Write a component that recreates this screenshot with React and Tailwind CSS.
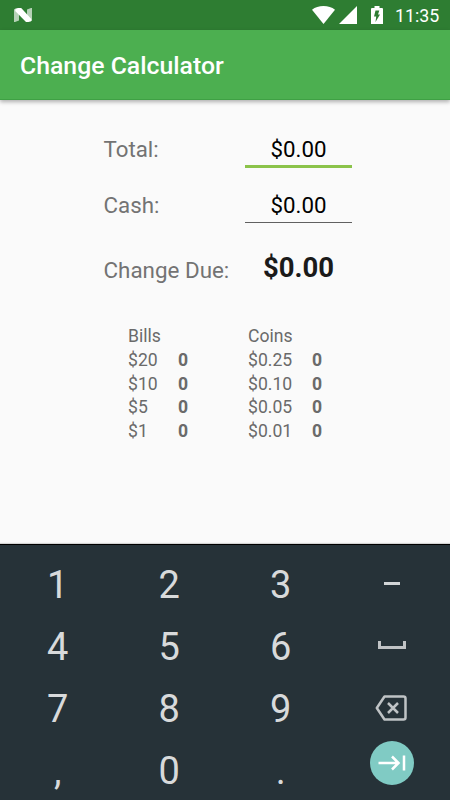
const bills = [
  { label: '$20', count: 0 },
  { label: '$10', count: 0 },
  { label: '$5', count: 0 },
  { label: '$1', count: 0 },
]

const coins = [
  { label: '$0.25', count: 0 },
  { label: '$0.10', count: 0 },
  { label: '$0.05', count: 0 },
  { label: '$0.01', count: 0 },
]

const keys = ['1', '2', '3', 'minus', '4', '5', '6', 'space', '7', '8', '9', 'delete', ',', '0', '.', 'next']

function StatusBar() {
  return (
    <div className="flex h-[30px] items-center justify-between bg-[#2e7d32] pl-[14px] pr-[9px] text-white">
      <svg width="18" height="14" viewBox="0 0 18 14">
        <path d="M0 1.500 1.500 .5H5v12L1 14H0zM18 12.500 16.500 13.500 13 13V1.500L17 0H18z" fill="#fff" fillOpacity="0.65" />
        <path d="M1.500 1 4 0H7.200L17.300 11V13L14.500 14H12L1.200 3z" fill="#fff" />
      </svg>
      <div className="flex h-full items-center">
        <svg width="23" height="18" viewBox="0 0 23 18" fill="#fff">
          <path d="M0 3.800C3.200 1.200 7 0 11.500 0S19.800 1.200 23 3.800L11.500 18z" />
        </svg>
        <svg width="18" height="18" viewBox="0 0 18 18" fill="#fff" className="ml-[4px]">
          <path d="M18 0v18H0z" />
        </svg>
        <svg width="12" height="18" viewBox="0 0 12 18" className="ml-[14px]">
          <path d="M3.500 0h5v2H11a1 1 0 0 1 1 1v15H0V3a1 1 0 0 1 1-1h2.500z" fill="#fff" />
          <path d="M4.500 4.500h3.800L7 8.500h2L4.500 16l.7-5.500H3z" fill="#2e7d32" />
        </svg>
        <span className="ml-[12px] mr-px mt-px w-[45px] whitespace-nowrap text-[17.800px] leading-none">11:35</span>
      </div>
    </div>
  )
}

function Denominations({ title, items, className }) {
  return (
    <div className={className}>
      <div>{title}</div>
      {items.map((item) => (
        <div key={item.label} className="flex justify-between">
          <span>{item.label}</span>
          <span className="w-[10px] font-bold">{item.count}</span>
        </div>
      ))}
    </div>
  )
}

function Key({ name }) {
  if (name === 'minus') {
    return <div className="mb-[2px] h-[3px] w-4 bg-[#d2d5d7]" />
  }
  if (name === 'space') {
    return <div className="mb-[2px] mr-px h-[8px] w-[28px] border-[3px] border-t-0 border-[#c0c3c5]" />
  }
  if (name === 'delete') {
    return (
      <svg width="32" height="26" viewBox="0 0 32 26" fill="none" stroke="#bfc3c5" strokeWidth="2.500" className="mr-[2px]">
        <path d="M9.500 1.500H28.500a2 2 0 0 1 2 2v19a2 2 0 0 1-2 2H9.500L1.800 13z" strokeLinejoin="round" />
        <path d="m13 8 10 10m0-10-10 10" />
      </svg>
    )
  }
  if (name === 'next') {
    return (
      <div className="mb-[15px] mr-px flex size-[44px] shrink-0 items-center justify-center rounded-full bg-[#80cbc4]">
        <svg width="28" height="16" viewBox="0 0 28 16" fill="none" stroke="#fff" strokeWidth="2.500">
          <path d="M0.500 8H20.500M14 1.500 20.500 8 14 14.500M26 .5v15" />
        </svg>
      </div>
    )
  }
  return <span className="pt-[2px]">{name}</span>
}

export default function App() {
  return (
    <div className="flex h-[800px] w-[450px] flex-col overflow-hidden bg-[#fafafa] font-[Roboto,sans-serif]">
      <StatusBar />
      <header className="flex h-[70px] shrink-0 items-center border-b border-[#3fa044] bg-[#4caf50] pl-5 pt-[3px] text-[24.800px] font-medium text-white shadow-[0_2px_4px_rgba(0,0,0,0.3)]">
        Change Calculator
      </header>

      <main className="flex flex-1 flex-col pt-[31px]">
        <div className="ml-[103px] flex w-[249px] flex-col text-[22.300px] text-[#737373]">
          <div className="flex h-[37px] justify-between">
            <span className="pl-[0.500px] leading-[37px]">Total:</span>
            <span className="w-[107px] border-b-[3px] border-[#8bc34a] text-center leading-[37px] text-black">$0.00</span>
          </div>
          <div className="mt-[19px] flex h-[36px] justify-between">
            <span className="pl-[0.500px] leading-[37px]">Cash:</span>
            <span className="w-[107px] border-b border-[#606060] text-center leading-[37px] text-black">$0.00</span>
          </div>
          <div className="mt-[26px] flex h-[40px] justify-between">
            <span className="pl-[0.500px] text-[22.400px] leading-[42px]">Change Due:</span>
            <span className="w-[107px] text-center text-[27.500px] font-bold leading-[38px] text-[#1a1a1a]">$0.00</span>
          </div>
        </div>
        <div className="ml-[128px] mt-[36px] flex gap-[60px] text-[17.600px] leading-[23.750px] text-[#6a6a6a]">
          <Denominations title="Bills" items={bills} className="w-[60px]" />
          <Denominations title="Coins" items={coins} className="w-[74px]" />
        </div>
      </main>

      <div className="h-[256px] shrink-0 border-t border-black bg-[#263238] px-[2px] pt-[8px] text-[38px] leading-none text-[#d8dadb] shadow-[0_-1px_1px_rgba(0,0,0,0.15)]">
        <div className="grid auto-rows-[62px] grid-cols-4">
          {keys.map((key) => (
            <div key={key} className="flex items-center justify-center">
              <Key name={key} />
            </div>
          ))}
        </div>
      </div>
    </div>
  )
}
